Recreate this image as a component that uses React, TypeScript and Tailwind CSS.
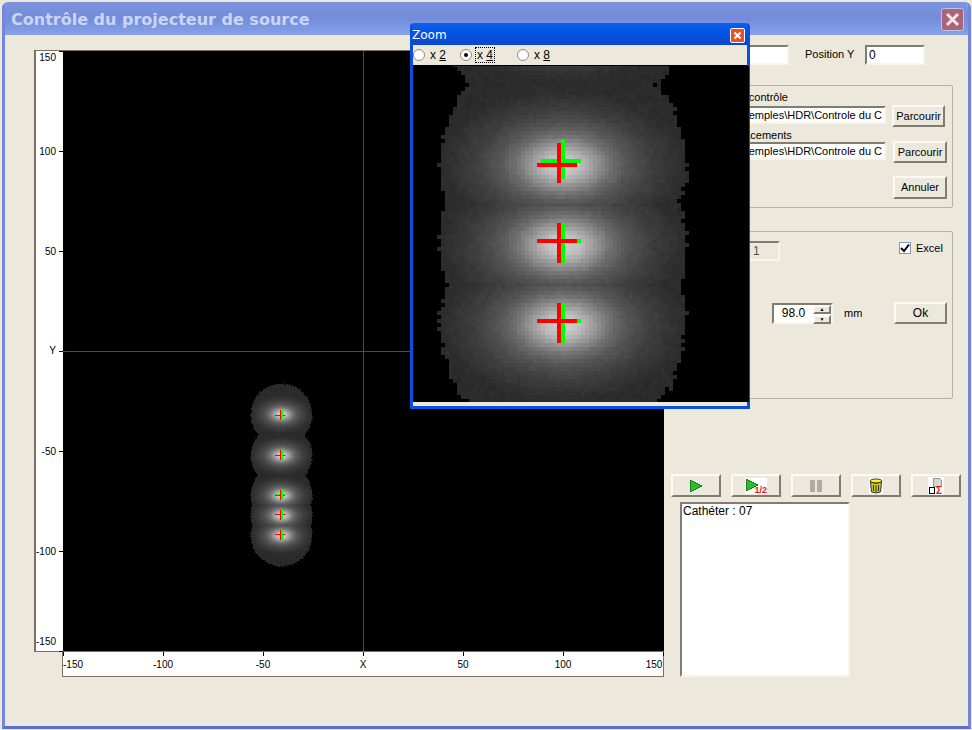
import React from 'react'

const FONT = 'font-["Liberation_Sans",Arial,sans-serif]'

// sources, in page pixels (plot starts at 63,51)
const CENTERS = [414, 455, 495, 515, 535]
const CENTER_X = 281
const PROFILE: [number, number][] = [[0, 205], [4, 190], [8, 150], [12, 108], [16, 82], [22, 60], [30, 42], [60, 36]]

const CROSSES = [
  { y: 410, rh: 415, gh: 415 },
  { y: 450, rh: 455, gh: 455 },
  { y: 490, rh: 495, gh: 494, gy: 489 },
  { y: 510, rh: 514, gh: 514 },
  { y: 530, rh: 534, gh: 534 },
]

function noise(x: number, y: number) {
  const s = Math.sin(x * 12.9898 + y * 78.233) * 43758.5453
  return s - Math.floor(s)
}

function profile(d: number) {
  for (let i = 1; i < PROFILE.length; i++) {
    if (d <= PROFILE[i][0]) {
      const [a, va] = PROFILE[i - 1]
      const [b, vb] = PROFILE[i]
      return va + ((vb - va) * (d - a)) / (b - a)
    }
  }
  return 36
}

function buildField(x0: number, y0: number, w: number, h: number) {
  const paths: Record<number, string> = {}
  for (let y = y0; y < y0 + h; y++) {
    for (let x = x0; x < x0 + w; x++) {
      let v = -1
      for (const cy of CENTERS) {
        const dx = x - CENTER_X
        const dy = y - cy
        if (Math.sqrt(dx * dx + dy * dy) < 30 + noise(x, y) * 1.5) {
          v = Math.max(v, profile(Math.sqrt(dx * dx + 2.6 * dy * dy)))
        }
      }
      if (v < 0) continue
      const g = Math.round((v + noise(y, x) * 5) / 4) * 4
      paths[g] = (paths[g] || '') + `M${x} ${y}h1v1h-1z`
    }
  }
  return Object.entries(paths)
}

const FIELD = buildField(244, 380, 84, 190)

function Field({ viewBox, className, main }: { viewBox: string; className: string; main?: boolean }) {
  return (
    <svg viewBox={viewBox} className={className} shapeRendering="crispEdges">
      <rect x="0" y="0" width="1000" height="1000" fill="#000" />
      {FIELD.map(([g, d]) => (
        <path key={g} d={d} fill={`rgb(${g},${g},${g})`} />
      ))}
      {CROSSES.map((c) =>
        main ? (
          <g key={c.y}>
            <rect x="276" y={c.gh} width="10" height="1" fill="#00ff00" />
            <rect x="280" y={c.y} width="1" height="10" fill="#ff0000" />
            <rect x="275" y={c.rh} width="10" height="1" fill="#ff0000" />
            <rect x="281" y={c.gy ?? c.y} width="2" height="10" fill="#00ff00" />
          </g>
        ) : (
          <g key={c.y}>
            <rect x="281" y={c.gy ?? c.y} width="1" height="10" fill="#00ff00" />
            <rect x="276" y={c.gh} width="10" height="1" fill="#00ff00" />
            <rect x="280" y={c.y} width="1" height="10" fill="#ff0000" />
            <rect x="275" y={c.rh} width="10" height="1" fill="#ff0000" />
          </g>
        )
      )}
    </svg>
  )
}

const Y_LABELS = [
  { t: '150', y: 1 },
  { t: '100', y: 95 },
  { t: '50', y: 195 },
  { t: 'Y', y: 294 },
  { t: '-50', y: 395 },
  { t: '-100', y: 495 },
  { t: '-150', y: 585 },
]
const X_LABELS = [
  { t: '-150', x: 10 },
  { t: '-100', x: 100 },
  { t: '-50', x: 200 },
  { t: 'X', x: 300 },
  { t: '50', x: 400 },
  { t: '100', x: 500 },
  { t: '150', x: 591 },
]

const raised = 'border-2 border-t-[#fbfaf5] border-l-[#fbfaf5] border-b-[#807c70] border-r-[#807c70]'
const sunken = 'border-2 border-t-[#807c70] border-l-[#807c70] border-b-[#f7f5ee] border-r-[#f7f5ee]'
const dither = 'bg-[#ece8dc] bg-[repeating-conic-gradient(#efebe0_0_25%,#e9e5d8_0_50%)] bg-[length:2px_2px]'

function Chart() {
  return (
    <div className="flex flex-col w-[630px] shrink-0 mt-[5px]">
      <div className="flex h-[602px]">
        <div className="relative w-[29px] h-[602px] bg-white border border-r-0 border-[#7a7068] border-l-2">
          {Y_LABELS.map((l) => (
            <span
              key={l.t}
              className="absolute right-[7px] text-[10px] leading-3 text-black"
              style={{ top: l.y }}
            >
              {l.t}
            </span>
          ))}
          {[0, 100, 200, 300, 400, 500, 600].map((y) => (
            <span key={y} className="absolute right-0 w-1 h-px bg-black" style={{ top: y }} />
          ))}
        </div>
        <div className="relative w-[601px] h-[602px] border-y border-[#7a7068] bg-black">
          <div className="absolute left-[300px] top-0 bottom-0 w-px bg-[#d01414]" />
          <div className="absolute left-0 right-0 top-[300px] h-px bg-[#d01414]" />
          <Field main viewBox="244 380 84 190" className="absolute left-[181px] top-[329px] w-[84px] h-[190px]" />
        </div>
      </div>
      <div className="relative ml-[28px] w-[602px] h-[25px] bg-white border border-t-0 border-[#7a7068]">
        {[0, 100, 200, 300, 400, 500, 600].map((x) => (
          <span key={x} className="absolute top-0 w-px h-1 bg-black" style={{ left: x }} />
        ))}
        {X_LABELS.map((l) => (
          <span
            key={l.t}
            className="absolute top-[7px] -translate-x-1/2 text-[10px] leading-3 text-black"
            style={{ left: l.x }}
          >
            {l.t}
          </span>
        ))}
      </div>
    </div>
  )
}

function PushButton({ label, className }: { label: string; className: string }) {
  return (
    <button className={`${raised} ${dither} text-[11px] text-black flex items-center justify-center ${className}`}>
      {label}
    </button>
  )
}

function PathField({ value }: { value: string }) {
  return (
    <div className={`${sunken} w-[214px] h-[18px] bg-white overflow-hidden flex justify-end items-center pr-[2px] text-[11px] leading-none whitespace-nowrap text-black`}>
      {value}
    </div>
  )
}

function ToolButton({ children }: { children: React.ReactNode }) {
  return <button className={`${raised} ${dither} relative w-[50px] h-[23px] flex items-center justify-center`}>{children}</button>
}

function Play() {
  return (
    <svg width="14" height="14" viewBox="0 0 14 14" shapeRendering="crispEdges">
      <polygon points="1,1 13,7 1,13" fill="#22c322" stroke="#14801a" strokeWidth="1" />
    </svg>
  )
}

function Toolbar() {
  return (
    <div className="flex gap-[10px] mt-[75px]">
      <ToolButton>
        <Play />
      </ToolButton>
      <ToolButton>
        <span className="relative w-[22px] h-[16px] bg-white flex">
          <Play />
          <span className="absolute right-0 bottom-[-1px] text-[9px] leading-[9px] font-bold text-[#ee1111]">1/2</span>
        </span>
      </ToolButton>
      <ToolButton>
        <svg width="14" height="12" viewBox="0 0 14 12">
          <rect x="1" y="0" width="5" height="12" rx="1" fill="#aeaba0" />
          <rect x="8" y="0" width="5" height="12" rx="1" fill="#aeaba0" />
        </svg>
      </ToolButton>
      <ToolButton>
        <svg width="14" height="16" viewBox="0 0 14 16">
          <rect width="14" height="16" fill="#fff" />
          <ellipse cx="7" cy="3" rx="6" ry="2" fill="#ffee22" stroke="#333" />
          <path d="M1.5 4 L2.5 14 Q7 16 11.5 14 L12.5 4 Q7 7 1.5 4 Z" fill="#c9c31a" stroke="#333" />
          <path d="M4.5 7v6M7 7.500v6.500M9.500 7v6" stroke="#333" strokeWidth="1" />
        </svg>
      </ToolButton>
      <ToolButton>
        <svg width="16" height="18" viewBox="0 0 16 18" shapeRendering="crispEdges">
          <rect width="16" height="18" fill="#fff" />
          <path d="M5 1h6l2 2v6H5z" fill="#d5d5d5" stroke="#999" />
          <rect x="1.500" y="10.500" width="5" height="6" fill="#fff" stroke="#000" />
          <text x="8" y="17" fontSize="10" fontWeight="bold" fill="#ee1111" fontFamily="'Liberation Sans', sans-serif">Σ</text>
        </svg>
      </ToolButton>
    </div>
  )
}

function RightPanel() {
  return (
    <div className="w-[297px] shrink-0 ml-[7px] flex flex-col text-black text-[11px]">
      <div className="flex items-start h-[20px]">
        <span className="w-[29px] pt-[2px] whitespace-nowrap">Position X</span>
        <div className={`${sunken} w-[89px] h-[20px] bg-white`} />
        <span className="ml-[16px] w-[60px] pt-[1px] whitespace-nowrap">Position Y</span>
        <div className={`${sunken} w-[60px] h-[20px] bg-white pl-[2px] leading-[16px] text-[12px]`}>0</div>
      </div>

      <div className="mt-[20px] h-[123px] w-[282px] border border-[#b5b1a3] rounded-[2px] flex">
        <div className="w-[214px] flex flex-col">
          <span className="mt-[3px] h-[17px] w-[116px] text-right whitespace-nowrap">Fichier de contrôle</span>
          <PathField value="C:\Exemples\HDR\Controle du C" />
          <span className="mt-[3px] h-[15px] w-[118px] text-right whitespace-nowrap">Fichier de déplacements</span>
          <PathField value="C:\Exemples\HDR\Controle du C" />
        </div>
        <div className="flex flex-col items-start ml-[6px] pt-[19px]">
          <PushButton label="Parcourir" className="w-[53px] h-[22px]" />
          <PushButton label="Parcourir" className="w-[54px] h-[22px] mt-[14px] ml-[1px]" />
          <PushButton label="Annuler" className="w-[54px] h-[23px] mt-[13px] ml-[1px]" />
        </div>
      </div>

      <div className="mt-[23px] h-[168px] w-[282px] border border-[#b5b1a3] rounded-[2px] flex flex-col">
        <div className="flex items-start mt-[9px]">
          <div className={`${sunken} ml-[50px] w-[58px] h-[20px] pl-[29px] leading-[16px] text-[12px] text-[#55534a]`}>1</div>
          <span className="ml-[119px] mt-[1px] w-[12px] h-[12px] bg-white border border-[#7f9db9] flex items-center justify-center">
            <svg width="10" height="10" viewBox="0 0 10 10">
              <path d="M1 5 L4 8 L9 1.500" fill="none" stroke="#000" strokeWidth="2" />
            </svg>
          </span>
          <span className="ml-[5px] text-[11px] leading-[14px]">Excel</span>
        </div>
        <div className="flex items-center mt-[41px] ml-[100px]">
          <div className={`${sunken} w-[61px] h-[21px] flex bg-white`}>
            <span className="flex-1 text-center text-[12px] leading-[17px]">98.0</span>
            <div className="w-[18px] flex flex-col gap-px">
              <span className={`${raised} ${dither} flex-1 flex items-center justify-center text-[5px] leading-none border`}>▲</span>
              <span className={`${raised} ${dither} flex-1 flex items-center justify-center text-[5px] leading-none border`}>▼</span>
            </div>
          </div>
          <span className="ml-[11px] w-[50px] text-[11px]">mm</span>
          <PushButton label="Ok" className="w-[53px] h-[22px] text-[12px]" />
        </div>
      </div>

      <Toolbar />

      <div className={`${sunken} ml-[9px] mt-[5px] w-[170px] h-[175px] bg-white px-[1px] text-[12px] leading-[14px]`}>
        Cathéter : 07
      </div>
    </div>
  )
}

function ZoomRadio({ label, digit, checked, className }: { label: string; digit: string; checked?: boolean; className: string }) {
  return (
    <label className={`flex items-center ${className}`}>
      <span className="w-[12px] h-[12px] rounded-full bg-white border border-[#8e8b80] flex items-center justify-center">
        {checked && <span className="w-1 h-1 rounded-full bg-black" />}
      </span>
      <span className={`ml-[3px] px-[1px] text-[12px] leading-[14px] text-black ${checked ? 'border border-dotted border-black' : 'border border-transparent'}`}>
        {label} <u>{digit}</u>
      </span>
    </label>
  )
}

function ZoomWindow() {
  return (
    <div className="absolute left-[410px] top-[23px] w-[340px] h-[386px] border-x-[3px] border-b-[3px] border-[#0a50de] rounded-t-[4px] flex flex-col">
      <div className="h-[22px] -mx-[1px] flex items-center justify-between pr-[3px] pt-[2px] bg-gradient-to-b from-[#0a60ee] via-[#0552e2] to-[#0a48cc] rounded-t-[4px]">
        <span className="text-white text-[12px] font-['DejaVu_Sans',sans-serif]">Zoom</span>
        <span className="w-[15px] h-[15px] rounded-[2px] border border-white bg-[#e0532e] flex items-center justify-center">
          <svg width="9" height="9" viewBox="0 0 9 9">
            <path d="M1.500 1.500 L7.500 7.500 M7.500 1.500 L1.500 7.500" stroke="#fff" strokeWidth="2" />
          </svg>
        </span>
      </div>
      <div className={`${dither} h-[21px] flex items-center border-b border-black`}>
        <ZoomRadio label="x" digit="2" className="w-[47px]" />
        <ZoomRadio label="x" digit="4" checked className="w-[57px]" />
        <ZoomRadio label="x" digit="8" className="w-[40px]" />
      </div>
      <Field viewBox="244 470.75 84 84" className="w-[336px] h-[336px] block shrink-0" />
      <div className="flex-1 bg-[#ece8dc]" />
    </div>
  )
}

export default function App() {
  return (
    <div className={`${FONT} relative w-[972px] h-[730px] bg-[#ece8dc] overflow-hidden pt-[2px] pl-[2px]`}>
      <div className="w-[969px] h-[727px] flex flex-col rounded-t-[6px] overflow-hidden border-x-[3px] border-b-[3px] border-x-[#7486dc] border-b-[#5c6cd2]">
        <div className="h-[33px] -mx-[3px] shrink-0 flex items-center justify-between pl-[9px] pr-[7px] pt-[2px] bg-gradient-to-b from-[#7d93dc] via-[#748cdc] to-[#86a2e8]">
          <span className="text-[#cbd6f5] text-[16px] font-bold font-['DejaVu_Sans',sans-serif] whitespace-nowrap">
            Contrôle du projecteur de source
          </span>
          <span className="w-[23px] h-[23px] rounded-[3px] border border-[#b8c4ec] bg-[#a86478] flex items-center justify-center">
            <svg width="15" height="15" viewBox="0 0 15 15">
              <path d="M2 2 L13 13 M13 2 L2 13" stroke="#f4e4ea" strokeWidth="3" />
            </svg>
          </span>
        </div>
        <div className={`${dither} flex-1 flex pl-[29px] pt-[10px]`}>
          <Chart />
          <RightPanel />
        </div>
      </div>
      <ZoomWindow />
    </div>
  )
}
